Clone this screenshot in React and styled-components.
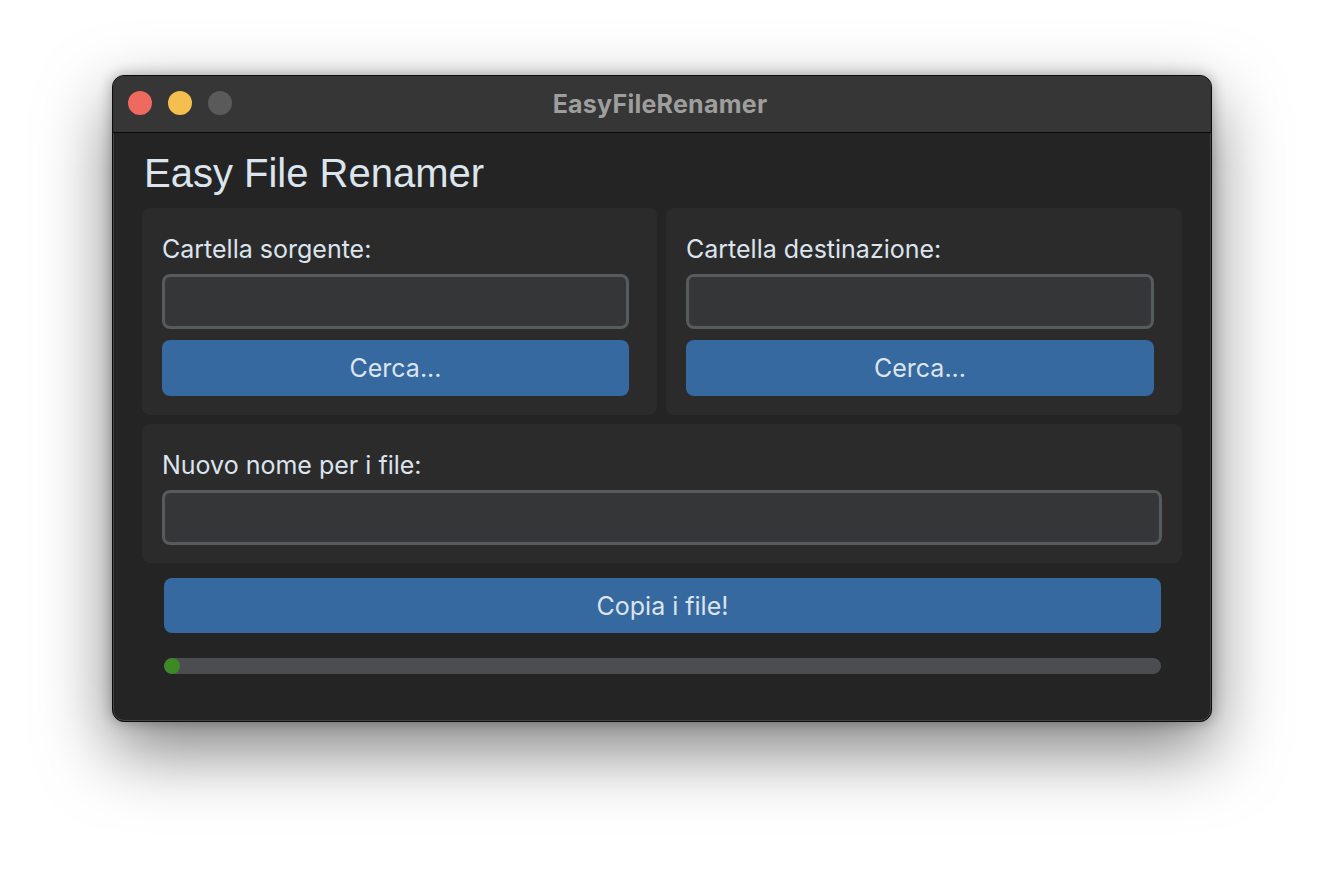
import React from 'react';
import styled, { createGlobalStyle } from 'styled-components';

const GlobalStyle = createGlobalStyle`
  html, body {
    margin: 0;
    padding: 0;
    background: #ffffff;
  }
  * {
    box-sizing: border-box;
  }
`;

const Desktop = styled.div`
  width: 1324px;
  height: 870px;
  padding: 75px 0 0 112px;
  font-family: Inter, "Noto Sans", sans-serif;
`;

const Window = styled.div`
  width: 1100px;
  height: 647px;
  border-radius: 12px;
  border: 1px solid #0c0c0c;
  background: #242424;
  overflow: hidden;
  display: flex;
  flex-direction: column;
  box-shadow: 0 0 0 1px rgba(90, 90, 90, 0.6) inset, 0 28px 70px rgba(0, 0, 0, 0.5), 0 0 14px rgba(0, 0, 0, 0.3);
`;

const TitleBar = styled.div`
  position: relative;
  height: 57px;
  flex-shrink: 0;
  background: #363636;
  border-bottom: 1px solid #0a0a0a;
  display: flex;
  align-items: center;
  justify-content: center;
`;

const Lights = styled.div`
  position: absolute;
  left: 15px;
  top: 15px;
  display: flex;
  gap: 16px;
`;

const Light = styled.span`
  width: 24px;
  height: 24px;
  border-radius: 50%;
  background: ${(p) => p.color};
`;

const WindowTitle = styled.div`
  font-size: 25px;
  font-weight: 700;
  color: #9e9e9e;
  letter-spacing: 0.25px;
  margin-left: -4px;
`;

const Body = styled.div`
  flex: 1;
  padding: 16px 29px 0 29px;
  display: flex;
  flex-direction: column;
`;

const Heading = styled.h1`
  margin: 0 0 11px 2px;
  font-size: 40px;
  line-height: 48px;
  font-weight: 400;
  color: #dce4ee;
  font-family: "Liberation Sans", Arial, sans-serif;
`;

const Row = styled.div`
  display: grid;
  grid-template-columns: 515px 1fr;
  gap: 9px;
  margin-bottom: 9px;
`;

const Panel = styled.div`
  background: #2b2b2b;
  border-radius: 8px;
  padding: ${(p) => p.pad};
  display: flex;
  flex-direction: column;
`;

const Label = styled.div`
  font-size: 25px;
  line-height: 30px;
  color: #dce4ee;
  margin: 0 0 ${(p) => p.mb}px 0;
`;

const Input = styled.input`
  height: 55px;
  width: 100%;
  border: 3px solid #565b5e;
  border-radius: 8px;
  background: #343638;
  color: #dce4ee;
  outline: none;
  font: inherit;
`;

const Button = styled.button`
  height: ${(p) => p.h}px;
  width: 100%;
  border: none;
  border-radius: 8px;
  background: #3669a0;
  color: #dce4ee;
  font-family: Inter, "Noto Sans", sans-serif;
  font-size: 25px;
  padding: 0;
  margin-top: ${(p) => p.mt || 0}px;
`;

const Footer = styled.div`
  padding: 15px 21px 0 22px;
  display: flex;
  flex-direction: column;
`;

const Progress = styled.div`
  margin-top: 25px;
  height: 16px;
  border-radius: 8px;
  background: #4c4d51;
  overflow: hidden;
`;

const ProgressFill = styled.div`
  height: 16px;
  border-radius: 8px;
  background: #3b8a24;
`;

const FolderPanel = ({ label }) => (
  <Panel pad="26px 28px 19px 20px">
    <Label mb={10}>{label}</Label>
    <Input />
    <Button h={56} mt={11}>Cerca...</Button>
  </Panel>
);

export default function App() {
  return (
    <>
      <GlobalStyle />
      <Desktop>
        <Window>
          <TitleBar>
            <Lights>
              <Light color="#ee6a5e" />
              <Light color="#f5bf4f" />
              <Light color="#5a5a5a" />
            </Lights>
            <WindowTitle>EasyFileRenamer</WindowTitle>
          </TitleBar>
          <Body>
            <Heading>Easy File Renamer</Heading>
            <Row>
              <FolderPanel label="Cartella sorgente:" />
              <FolderPanel label="Cartella destinazione:" />
            </Row>
            <Panel pad="26px 20px 18px 20px">
              <Label mb={10}>Nuovo nome per i file:</Label>
              <Input />
            </Panel>
            <Footer>
              <Button h={55}>Copia i file!</Button>
              <Progress>
                <ProgressFill style={{ width: '16px' }} />
              </Progress>
            </Footer>
          </Body>
        </Window>
      </Desktop>
    </>
  );
}
